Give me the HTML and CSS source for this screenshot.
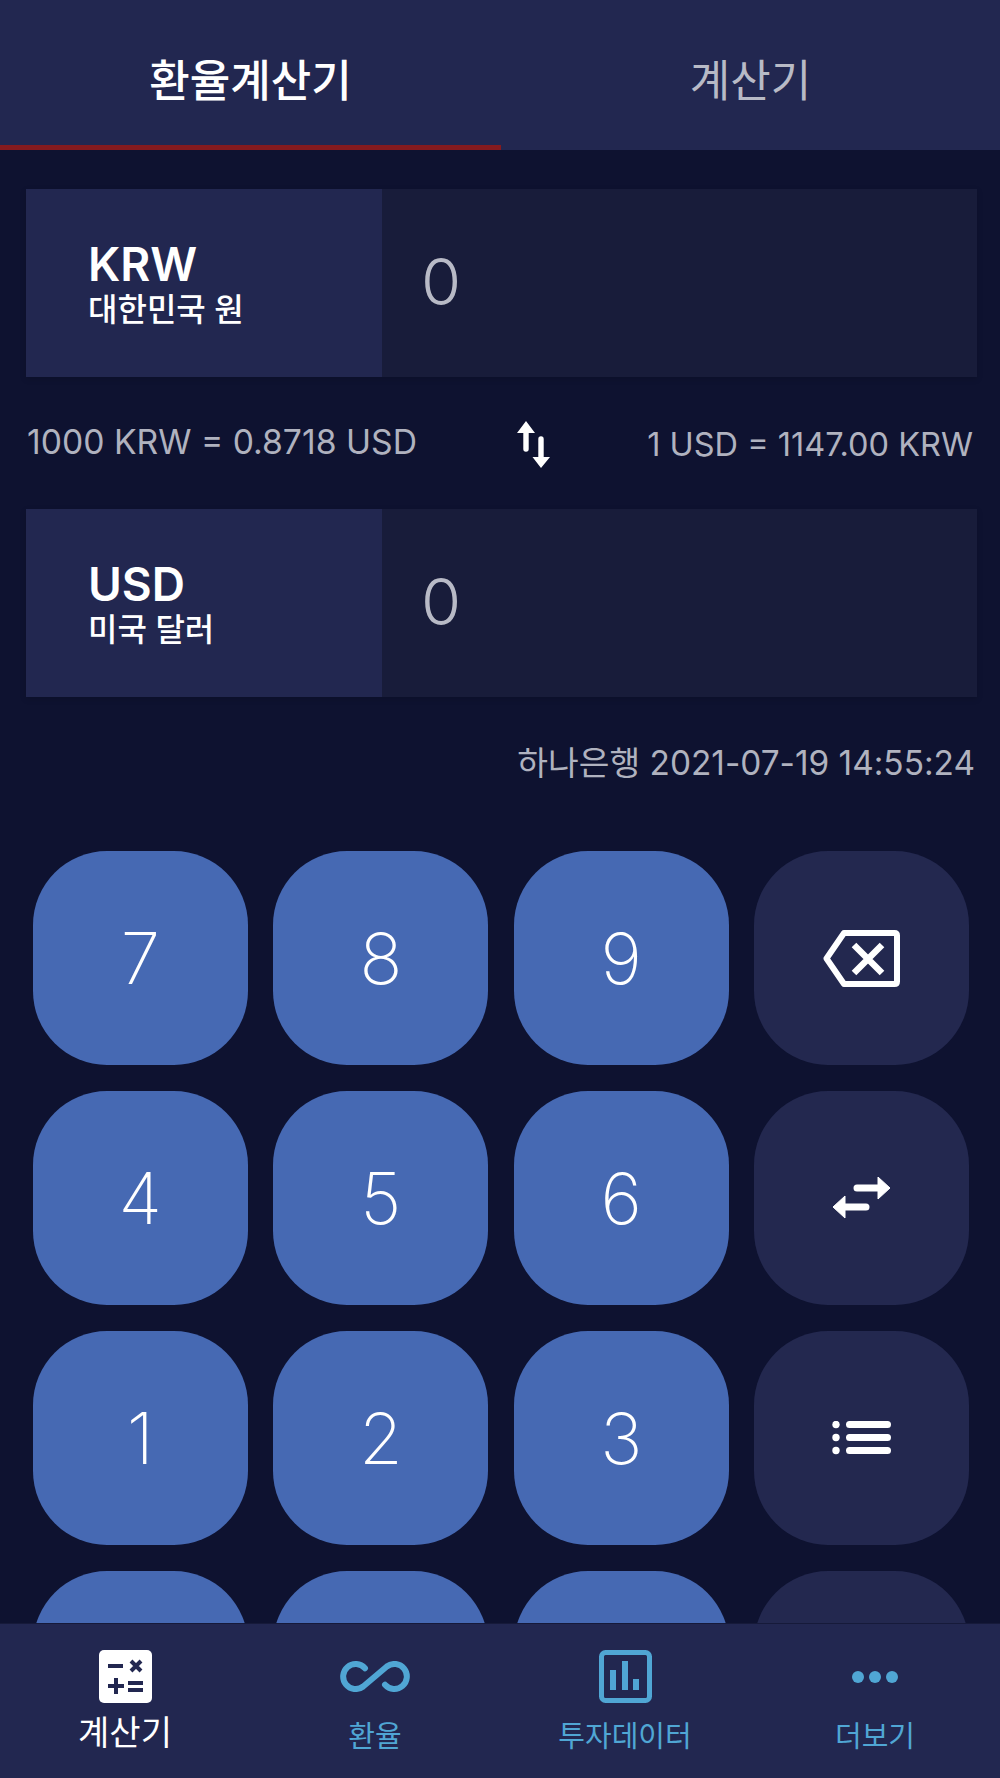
FILE: index.html
```html
<!DOCTYPE html>
<html lang="ko">
<head>
    <meta charset="UTF-8">
    <title>환율계산기</title>
    <link rel="stylesheet" href="styles.css">
</head>
<body>
    <div class="app">
        <div class="tabs">
            <div class="tab active">환율계산기</div>
            <div class="tab">계산기</div>
        </div>
        <div class="main">
            <div class="card">
                <div class="cur">
                    <div class="code">KRW</div>
                    <div class="name">대한민국 원</div>
                </div>
                <div class="val">0</div>
            </div>
            <div class="rate">
                <span class="rate-l">1000 KRW = 0.8718 USD</span>
                <svg class="swap" width="33" height="47" viewBox="0 0 33 47">
                    <path d="M9 28V8M24 18V38" stroke="#fff" stroke-width="5.4" stroke-linecap="round"/>
                    <path d="M9 0L18 12H0ZM24 47L15.500 36H33Z" fill="#fff"/>
                </svg>
                <span class="rate-r">1 USD = 1147.00 KRW</span>
            </div>
            <div class="card">
                <div class="cur">
                    <div class="code">USD</div>
                    <div class="name">미국 달러</div>
                </div>
                <div class="val">0</div>
            </div>
            <div class="date">하나은행 2021-07-19 14:55:24</div>
            <div class="keys">
                <div class="key">7</div>
                <div class="key">8</div>
                <div class="key">9</div>
                <div class="key dark">
                    <svg width="77" height="57" viewBox="0 0 77 57" fill="none" stroke="#fff">
                        <path d="M21 3H71.500Q74 3 74 5.500V51.500Q74 54 71.500 54H21L3.500 28.500Z" stroke-width="6" stroke-linejoin="round"/>
                        <path d="M31 15L59 43M59 15L31 43" stroke-width="6.500"/>
                    </svg>
                </div>
                <div class="key">4</div>
                <div class="key">5</div>
                <div class="key">6</div>
                <div class="key dark">
                    <svg width="57" height="42" viewBox="0 0 57 42">
                        <path d="M24 11H46M11 30H33" stroke="#fff" stroke-width="7" stroke-linecap="round"/>
                        <path d="M45 0L57 11L45 22ZM12 19V41L0 30Z" fill="#fff" stroke="#fff" stroke-width="1" stroke-linejoin="round"/>
                    </svg>
                </div>
                <div class="key">1</div>
                <div class="key">2</div>
                <div class="key">3</div>
                <div class="key dark">
                    <svg width="59" height="34" viewBox="0 0 59 34">
                        <path d="M17.500 3.500H55.500M17.500 16.500H55.500M17.500 29.500H55.500" stroke="#fff" stroke-width="7" stroke-linecap="round"/>
                        <circle cx="4" cy="3.500" r="3.700" fill="#fff"/>
                        <circle cx="4" cy="16.500" r="3.700" fill="#fff"/>
                        <circle cx="4" cy="29.500" r="3.700" fill="#fff"/>
                    </svg>
                </div>
                <div class="key"></div>
                <div class="key"></div>
                <div class="key"></div>
                <div class="key dark"></div>
            </div>
        </div>
        <div class="nav">
            <div class="nav-item on">
                <div class="ico">
                    <svg width="53" height="53" viewBox="0 0 53 53">
                        <rect width="53" height="53" rx="5" fill="#fff"/>
                        <path d="M9 16H24M32 11L42 21M42 11L32 21M9 36H25M17 28V44M29 33H44M29 40H44" stroke="#222750" stroke-width="4"/>
                    </svg>
                </div>
                <div class="lbl">계산기</div>
            </div>
            <div class="nav-item">
                <div class="ico">
                    <svg width="70" height="31" viewBox="0 0 70 31" fill="none">
                        <path d="M25 7.200A12.500 12.500 0 1 0 23.200 25.500L46.800 5.500A12.500 12.500 0 1 1 45 23.800" stroke="#50a6d4" stroke-width="6" stroke-linecap="round"/>
                    </svg>
                </div>
                <div class="lbl">환율</div>
            </div>
            <div class="nav-item">
                <div class="ico">
                    <svg width="53" height="53" viewBox="0 0 53 53">
                        <rect x="2.500" y="2.500" width="48" height="48" rx="4" fill="none" stroke="#50a6d4" stroke-width="5"/>
                        <path d="M11 20H17V40H11ZM23 11H29V40H23ZM34 29H40V40H34Z" fill="#50a6d4"/>
                    </svg>
                </div>
                <div class="lbl">투자데이터</div>
            </div>
            <div class="nav-item">
                <div class="ico">
                    <svg width="46" height="12" viewBox="0 0 46 12" fill="#50a6d4">
                        <circle cx="6" cy="6" r="6"/>
                        <circle cx="23" cy="6" r="6"/>
                        <circle cx="40" cy="6" r="6"/>
                    </svg>
                </div>
                <div class="lbl">더보기</div>
            </div>
        </div>
    </div>
</body>
</html>
```

FILE: styles.css
```css
* {
    margin: 0;
    padding: 0;
    box-sizing: border-box;
}
body {
    background: #0e1230;
    font-family: Inter, "Noto Sans CJK KR", sans-serif;
    overflow: hidden;
}
.app {
    width: 1000px;
    height: 1778px;
    display: flex;
    flex-direction: column;
}
.tabs {
    height: 150px;
    flex: none;
    display: flex;
    background: #222750;
}
.tab {
    flex: 1;
    text-align: center;
    line-height: 162px;
    font-size: 44px;
    color: #b8bac6;
}
.tab.active {
    flex: 0 0 501px;
    color: #fff;
    font-weight: 500;
    border-bottom: 5px solid #851a1e;
}
.main {
    flex: 1;
    min-height: 0;
    overflow: hidden;
    padding: 39px 23px 0 26px;
}
.card {
    height: 188px;
    display: flex;
    background: #181c3a;
    box-shadow: 0 2px 6px rgba(0, 0, 0, 0.15);
}
.cur {
    width: 356px;
    background: #222750;
    padding: 50px 0 0 62px;
    color: #fff;
}
.code {
    font-size: 46px;
    line-height: 50px;
    font-weight: 600;
}
.name {
    font-size: 32px;
    line-height: 42px;
    font-weight: 500;
}
.val {
    padding-left: 39px;
    line-height: 186px;
    font-size: 65px;
    font-weight: 300;
    color: #b8bac6;
}
.rate {
    height: 132px;
    padding: 0 4px 0 1px;
    display: flex;
    justify-content: space-between;
    align-items: center;
    color: #b0b2bf;
}
.rate-l {
    padding-bottom: 4px;
    font-size: 33.700px;
}
.swap {
    margin: 2px 0 0 2px;
}
.rate-r {
    padding-top: 2px;
    font-size: 32.500px;
}
.date {
    height: 154px;
    padding: 39px 2px 0 0;
    text-align: right;
    font-size: 33.400px;
    color: #b0b2bf;
}
.keys {
    display: grid;
    grid-template-columns: repeat(4, 214.700px);
    grid-auto-rows: 214px;
    column-gap: 25.800px;
    row-gap: 26px;
    padding-left: 7px;
}
.key {
    display: flex;
    align-items: center;
    justify-content: center;
    background: #4669b3;
    border-radius: 74px;
    color: #fff;
    font-size: 71px;
    font-weight: 200;
}
.key.dark {
    background: #23284f;
}
.nav {
    height: 155px;
    flex: none;
    display: flex;
    background: #222750;
    border-top: 1px solid #161a3a;
}
.nav-item {
    flex: 1;
    padding-top: 26px;
    text-align: center;
    color: #50a6d4;
    font-size: 29px;
}
.ico {
    height: 53px;
    display: flex;
    align-items: center;
    justify-content: center;
}
.lbl {
    margin-top: 14px;
    line-height: 40px;
}
.on .lbl {
    margin-top: 10px;
    color: #fff;
    font-size: 34px;
}
```
